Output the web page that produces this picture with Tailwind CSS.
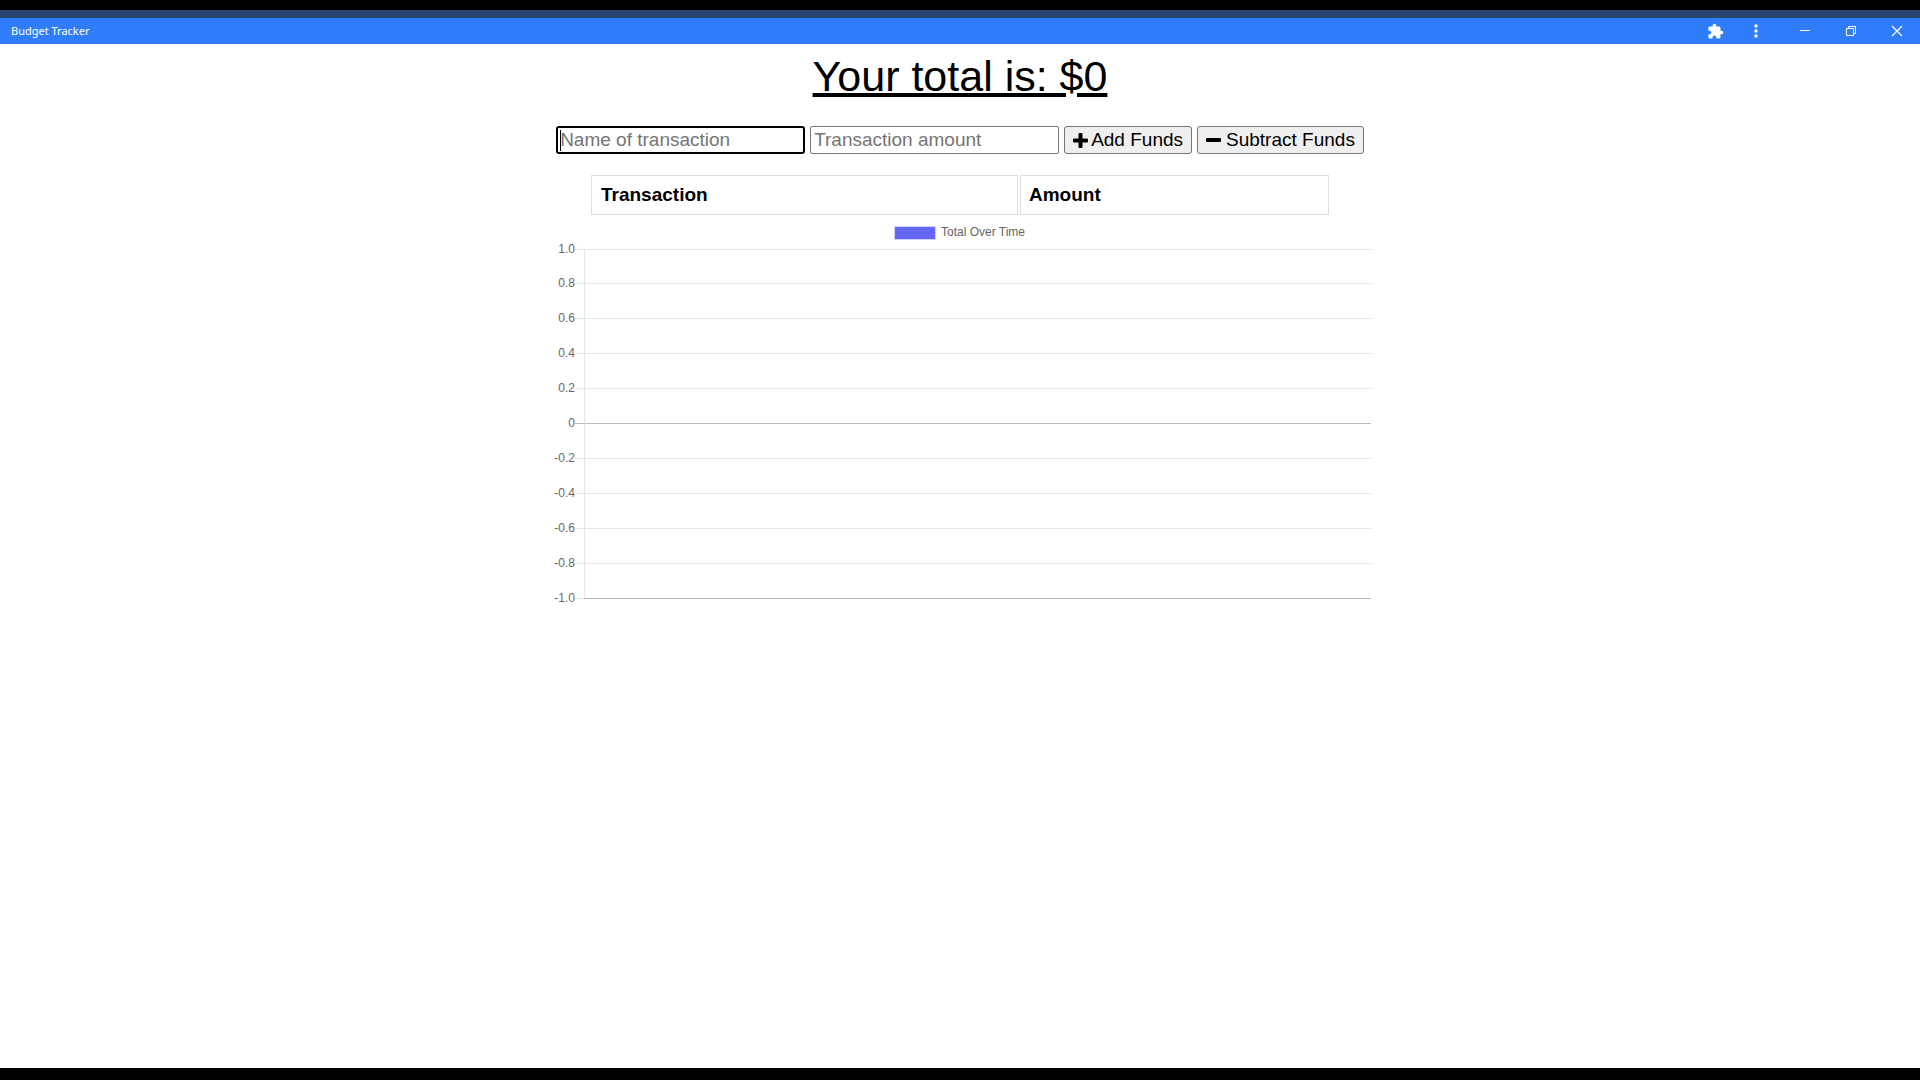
<!DOCTYPE html>
<html lang="en">
<head>
<meta charset="utf-8">
<title>Budget Tracker</title>
<script src="https://cdn.jsdelivr.net/npm/@tailwindcss/browser@4"></script>
</head>
<body class="flex min-h-screen flex-col border-t-10 border-b-12 border-black bg-white font-['Liberation_Sans',Arial,sans-serif] text-black">
<header class="flex h-[34px] shrink-0 items-center justify-between border-t-8 border-[#284670] bg-[#2f7dfb] pl-[11px] text-white">
  <span class="font-['Noto_Sans',sans-serif] text-[11px]">Budget Tracker</span>
  <div class="flex h-full items-center">
    <button aria-label="Extensions" class="flex h-full w-7 items-center justify-center"><svg class="size-[17px]" viewBox="0 0 24 24" fill="currentColor"><path d="M20.5 11H19V7c0-1.1-.9-2-2-2h-4V3.5C13 2.12 11.88 1 10.5 1S8 2.12 8 3.5V5H4c-1.1 0-1.99.9-1.99 2v3.8H3.5c1.49 0 2.7 1.21 2.7 2.7s-1.21 2.7-2.7 2.7H2V20c0 1.1.9 2 2 2h3.8v-1.5c0-1.49 1.21-2.7 2.7-2.7s2.7 1.21 2.7 2.7V22H17c1.1 0 2-.9 2-2v-4h1.5c1.38 0 2.5-1.12 2.5-2.5S21.88 11 20.5 11z"/></svg></button>
    <button aria-label="Menu" class="flex h-full w-[53px] items-center justify-center"><svg class="h-4 w-1" viewBox="0 0 4 16" fill="currentColor"><circle cx="2" cy="3" r="1.7"/><circle cx="2" cy="8" r="1.7"/><circle cx="2" cy="13" r="1.7"/></svg></button>
    <button aria-label="Minimize" class="flex h-full w-[46px] items-center justify-center"><svg class="size-[10px]" viewBox="0 0 10 10" stroke="currentColor"><path d="M0 4.5h10"/></svg></button>
    <button aria-label="Restore" class="flex h-full w-[46px] items-center justify-center"><svg class="size-[10px]" viewBox="0 0 10 10" fill="none" stroke="currentColor"><path d="M.5 2.5h7v7h-7zM2.5 2.5v-2h7v7h-2"/></svg></button>
    <button aria-label="Close" class="flex h-full w-[46px] items-center justify-center"><svg class="size-[10px] overflow-visible" viewBox="0 0 10 10" stroke="currentColor" stroke-width="1.2"><path d="M0 0l10 10M10 0L0 10"/></svg></button>
  </div>
</header>
<main class="mx-auto w-full max-w-[822px] grow pt-2">
  <h1 class="text-center text-[43px] leading-12 underline decoration-4 underline-offset-2">Your total is: $0</h1>
  <form class="mt-[26px] flex justify-center gap-[5px] text-[19px] leading-6">
    <div class="relative w-[249px]">
      <input aria-label="Name of transaction" placeholder="Name of transaction" class="h-7 w-full rounded-[3px] border-2 border-black px-0.5 placeholder-[#757575] outline-none">
      <span class="absolute top-1 left-1 h-[21px] w-px bg-black"></span>
    </div>
    <input aria-label="Transaction amount" placeholder="Transaction amount" class="h-7 w-[249px] rounded-[2px] border border-[#767676] px-[3px] placeholder-[#757575]">
    <button type="button" class="flex h-7 items-center gap-[3px] rounded-[3px] border border-[#767676] bg-[#efefef] px-2"><svg class="size-[15px]" viewBox="0 0 15 15" fill="currentColor"><path d="M6.6 0h1.8q1.1 0 1.1 1.1v4.4h4.4q1.1 0 1.1 1.1v1.8q0 1.1-1.1 1.1H9.5v4.4q0 1.1-1.1 1.1H6.6q-1.1 0-1.1-1.1V9.5H1.1q-1.1 0-1.1-1.1V6.6q0-1.1 1.1-1.1h4.4V1.1Q5.5 0 6.6 0z"/></svg>Add Funds</button>
    <button type="button" class="flex h-7 items-center gap-[5px] rounded-[3px] border border-[#767676] bg-[#efefef] px-2"><svg class="size-[15px]" viewBox="0 0 15 15" fill="currentColor"><rect y="5" width="15" height="4" rx="1"/></svg>Subtract Funds</button>
  </form>
  <div class="mt-[19px] px-10">
    <table class="w-full table-fixed border-separate border-spacing-0.5 text-left text-[19px] leading-[22px]">
      <thead><tr>
        <th class="w-[427px] border border-[#ddd] px-[9px] py-2">Transaction</th>
        <th class="border border-[#ddd] px-2 py-2">Amount</th>
      </tr></thead>
    </table>
  </div>
  <figure class="text-[12px] leading-4 text-[#666]">
    <figcaption class="flex h-8 items-center justify-center gap-[6px] pb-0.5"><span class="mt-0.5 h-3 w-10 bg-[#6666f8] outline-1 outline-[#d4d4f5]"></span>Total Over Time</figcaption>
    <div id="grid"></div>
  </figure>
</main>
<script>
const ticks = ['1.0', '0.8', '0.6', '0.4', '0.2', '0', '-0.2', '-0.4', '-0.6', '-0.8', '-1.0'];
document.getElementById('grid').innerHTML = ticks.map((t, i) => {
  const last = i === ticks.length - 1;
  const dark = t === '0' || last;
  return `<div class="flex ${i === 0 ? 'h-[34px]' : 'h-[35px]'}">
    <span class="-mt-2 w-[26px] text-right">${t}</span>
    <span class="w-[9px] border-t ${t === '0' ? 'border-[#bbb]' : 'border-[#e5e5e5]'}"></span>
    <span class="grow border-t ${dark ? 'border-t-[#bbb]' : 'border-t-[#e5e5e5]'} ${last ? '' : 'border-l border-l-[#e5e5e5]'}"></span>
  </div>`;
}).join('');
</script>
</body>
</html>
